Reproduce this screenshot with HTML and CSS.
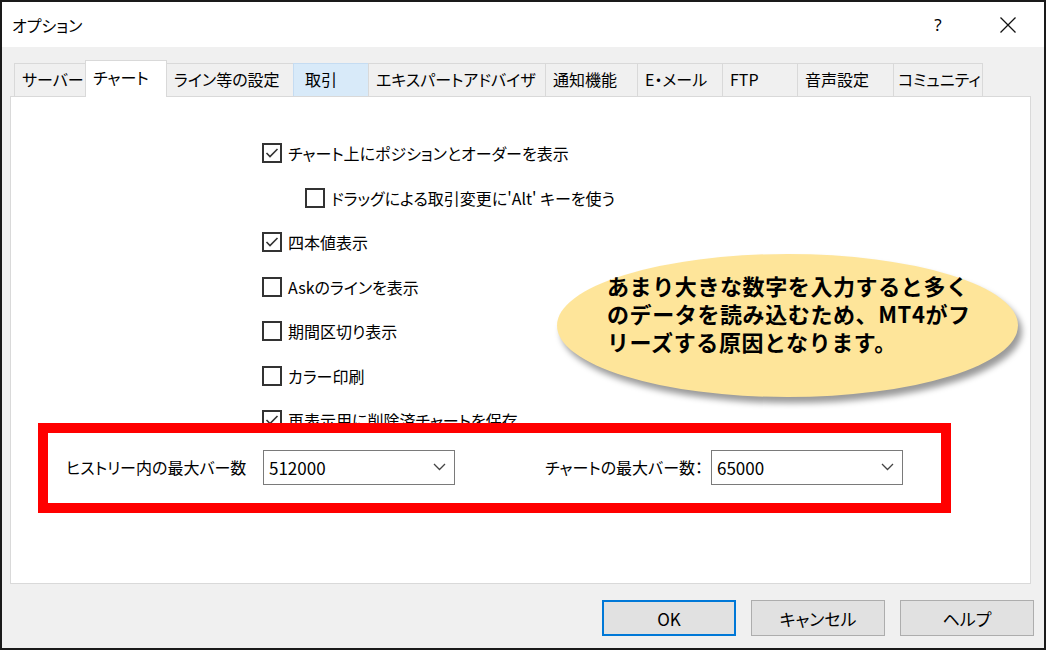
FILE: index.html
```html
<!DOCTYPE html>
<html lang="ja">
<head>
    <meta charset="UTF-8">
    <title>オプション</title>
    <link rel="stylesheet" href="styles.css">
</head>
<body>
    <div class="window">
        <div class="titlebar">
            <span class="title">オプション</span>
            <span class="help">?</span>
            <span class="close">
                <svg width="18" height="18" viewBox="0 0 18 18"><path d="M1.5 1.5 L16.5 16.5 M16.5 1.5 L1.5 16.5" stroke="#111" stroke-width="1.3" fill="none"/></svg>
            </span>
        </div>

        <div class="tabs">
            <div class="tab">サーバー</div>
            <div class="tab active">チャート</div>
            <div class="tab">ライン等の設定</div>
            <div class="tab hover">取引</div>
            <div class="tab">エキスパートアドバイザ</div>
            <div class="tab">通知機能</div>
            <div class="tab">E・メール</div>
            <div class="tab">FTP</div>
            <div class="tab">音声設定</div>
            <div class="tab">コミュニティ</div>
        </div>

        <div class="panel">
            <ul class="checks">
                <li class="check on"><span class="box"><svg viewBox="0 0 16 16"><polyline points="2.5,8 6,11.5 13.5,4" /></svg></span>チャート上にポジションとオーダーを表示</li>
                <li class="check sub"><span class="box"></span>ドラッグによる取引変更に'Alt' キーを使う</li>
                <li class="check on"><span class="box"><svg viewBox="0 0 16 16"><polyline points="2.5,8 6,11.5 13.5,4" /></svg></span>四本値表示</li>
                <li class="check"><span class="box"></span>Askのラインを表示</li>
                <li class="check"><span class="box"></span>期間区切り表示</li>
                <li class="check"><span class="box"></span>カラー印刷</li>
                <li class="check on"><span class="box"><svg viewBox="0 0 16 16"><polyline points="2.5,8 6,11.5 13.5,4" /></svg></span>再表示用に削除済チャートを保存</li>
            </ul>

            <div class="bars-row">
                <label class="bars-label">ヒストリー内の最大バー数</label>
                <div class="combo">
                    <span>512000</span>
                    <svg width="13" height="8" viewBox="0 0 13 8"><polyline points="1,1 6.5,6.5 12,1" /></svg>
                </div>
                <label class="bars-label right">チャートの最大バー数：</label>
                <div class="combo">
                    <span>65000</span>
                    <svg width="13" height="8" viewBox="0 0 13 8"><polyline points="1,1 6.5,6.5 12,1" /></svg>
                </div>
            </div>
        </div>

        <div class="buttons">
            <button class="btn primary">OK</button>
            <button class="btn">キャンセル</button>
            <button class="btn">ヘルプ</button>
        </div>

        <!-- 注釈 -->
        <div class="callout">
            <div class="callout-line">あまり大きな数字を入力すると多く</div>
            <div class="callout-line">のデータを読み込むため、MT4がフ</div>
            <div class="callout-line">リーズする原因となります。</div>
        </div>
        <div class="highlight"></div>
    </div>
</body>
</html>
```

FILE: styles.css
```css
body {
    margin: 0;
    font-family: "Noto Sans CJK JP", sans-serif;
    font-size: 16px;
    font-feature-settings: "palt";
    color: #000;
    background: #fff;
}
.window {
    position: relative;
    width: 1046px;
    height: 650px;
    box-sizing: border-box;
    border: 2px solid #1a1a1a;
    background: #f0f0f0;
    display: flex;
    flex-direction: column;
}
.titlebar {
    height: 45px;
    flex: none;
    background: #fff;
    display: flex;
    align-items: center;
    padding-left: 10px;
    padding-right: 13px;
}
.title {
    flex: 1;
    font-size: 16px;
}
.help {
    width: 46px;
    text-align: center;
    font-family: "Noto Sans", sans-serif;
    font-size: 17px;
}
.close {
    width: 46px;
    margin-left: 24px;
    display: flex;
    justify-content: center;
}
.tabs {
    height: 49px;
    flex: none;
    display: flex;
    align-items: flex-end;
    padding-left: 13px;
}
.tab {
    height: 33px;
    box-sizing: border-box;
    padding: 0 7px 2px;
    margin-left: -1px;
    border: 1px solid #d9d9d9;
    border-bottom: none;
    background: #f0f0f0;
    display: flex;
    align-items: center;
    white-space: nowrap;
}
.tab:nth-child(1) { width: 72px; padding-right: 3px; }
.tab:nth-child(2) { width: 82px; }
.tab:nth-child(3) { width: 128px; }
.tab:nth-child(4) { width: 76px; }
.tab:nth-child(5) { width: 178px; }
.tab:nth-child(6) { width: 93px; }
.tab:nth-child(7) { width: 86px; }
.tab:nth-child(8) { width: 76px; }
.tab:nth-child(9) { width: 97px; }
.tab:nth-child(10) { width: 90px; padding-left: 4px; padding-right: 4px; }
.tab.active {
    position: relative;
    z-index: 1;
    height: 37px;
    margin-bottom: -1px;
    padding-bottom: 4px;
    background: #fff;
}
.tab.hover {
    background: #d8eaf9;
    border-color: #c5dcf2;
    padding-left: 11px;
}
.panel {
    height: 488px;
    flex: none;
    box-sizing: border-box;
    margin: 0 13px 0 8px;
    background: #fff;
    border: 1px solid #d9d9d9;
}
.checks {
    list-style: none;
    margin: 0;
    padding: 34px 0 0 251px;
}
.check {
    height: 44.5px;
    display: flex;
    align-items: center;
    gap: 6px;
}
.check.sub {
    padding-left: 43px;
}
.box {
    width: 20px;
    height: 20px;
    box-sizing: border-box;
    border: 2px solid #333;
    background: #fff;
    display: flex;
}
.box svg {
    width: 16px;
    height: 16px;
    fill: none;
    stroke: #333;
    stroke-width: 1.6;
}
.bars-row {
    margin-top: 7px;
    padding-left: 55px;
    display: flex;
    align-items: center;
}
.bars-label {
    width: 197px;
}
.bars-label.right {
    width: 256px;
    box-sizing: border-box;
    padding-right: 8px;
    text-align: right;
}
.combo {
    width: 192px;
    height: 35px;
    box-sizing: border-box;
    border: 1px solid #7a7a7a;
    padding: 0 8px 0 5px;
    display: flex;
    align-items: center;
    justify-content: space-between;
    font-size: 17px;
}
.combo svg {
    fill: none;
    stroke: #444;
    stroke-width: 1.3;
}
.buttons {
    margin-top: 16px;
    padding-right: 10px;
    display: flex;
    justify-content: flex-end;
    gap: 15px;
}
.btn {
    width: 134px;
    height: 36px;
    background: #e1e1e1;
    border: 1px solid #adadad;
    font-family: inherit;
    font-size: 17px;
    font-feature-settings: "palt";
    color: #000;
    padding: 0;
}
.btn.primary {
    border: 2px solid #0078d7;
}
.callout {
    position: absolute;
    left: 555px;
    top: 252px;
    width: 461px;
    height: 143px;
    box-sizing: border-box;
    padding: 21px 0 0 50px;
    border-radius: 50%;
    background: #fee59a;
    box-shadow: 4px 6px 6px rgba(0,0,0,0.4);
    font-size: 22px;
    font-weight: bold;
    font-feature-settings: normal;
    letter-spacing: 0.6px;
    white-space: nowrap;
}
.callout-line {
    height: 28px;
    line-height: 20px;
}
.highlight {
    position: absolute;
    left: 36px;
    top: 421px;
    width: 913px;
    height: 90px;
    box-sizing: border-box;
    border: 10px solid #ff0000;
}
```
